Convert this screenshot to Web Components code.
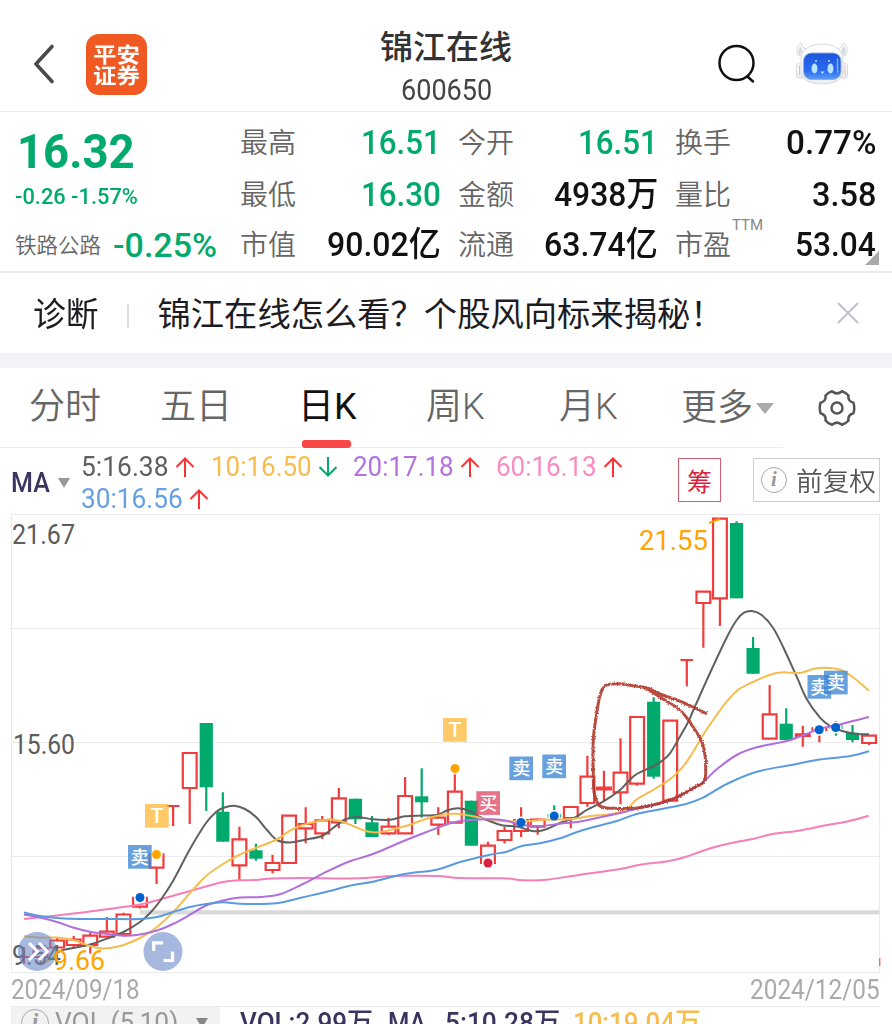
<!DOCTYPE html>
<html lang="zh-CN">
<head>
<meta charset="utf-8">
<title>锦江在线 600650</title>
<style>
  html, body { margin: 0; padding: 0; }
  body {
    width: 892px;
    height: 1024px;
    overflow: hidden;
    background: #fff;
    font-family: Roboto, "Noto Sans CJK SC", sans-serif;
    --up: #f23c3c;
    --down: #00aa6c;
    --ink: #111;
    --gray: #666;
  }
</style>
</head>
<body>
<stock-page></stock-page>

<script>
// text squeezed or stretched to a fixed width
class FitText extends HTMLElement {
  constructor() {
    super();
    this.attachShadow({ mode: "open" });
    this.shadowRoot.innerHTML = `
      <style>
      :host { display: inline-block; white-space: nowrap; line-height: 1.2; }
      span { display: inline-block; transform-origin: 0 50%; }
      </style>
      <span><slot></slot></span>
    `;
  }

  connectedCallback() {
    const width = Number(this.getAttribute("width"));
    const span = this.shadowRoot.querySelector("span");
    const natural = span.offsetWidth;
    this.style.width = `${width}px`;
    if (natural) {
      span.style.transform = `scaleX(${width / natural})`;
    }
  }
}

class StockHeader extends HTMLElement {
  constructor() {
    super();
    this.attachShadow({ mode: "open" });
    this.shadowRoot.innerHTML = `
      <style>
      :host {
        display: grid;
        grid-template-columns: 52px 61px 1fr 79px 52px;
        align-items: center;
        height: 112px;
        box-sizing: border-box;
        padding: 17px 44px 0 34px;
        border-bottom: 1px solid #ececee;
      }
      .logo {
        display: grid;
        place-content: center;
        box-sizing: border-box;
        width: 61px;
        height: 61px;
        border-radius: 13px;
        background: #f05a22;
        color: #fff;
        font: 700 21px/21px "Noto Sans CJK SC", sans-serif;
      }
      .logo fit-text { line-height: 21px; }
      .name { display: flex; flex-direction: column; align-items: center; width: 140px; margin: 3px 0 0 229px; color: #333; }
      .name b { font: 500 33px/44px "Noto Sans CJK SC", sans-serif; }
      .name fit-text { font-size: 30px; margin-top: 5px; line-height: 36px; color: #444; }
      svg { display: block; }
      </style>
      <svg width="22" height="42" viewBox="0 0 22 42" fill="none" stroke="#4a4a4a" stroke-width="3.600" stroke-linecap="round" stroke-linejoin="round"><path d="M18 3.500L2 21l16 17.500"/></svg>
      <div class="logo"><fit-text width="47">平安</fit-text><fit-text width="47">证券</fit-text></div>
      <div class="name"><b><slot name="name"></slot></b><fit-text width="91"><slot name="code"></slot></fit-text></div>
      <svg width="40" height="42" viewBox="0 0 40 42" fill="none" stroke="#111" stroke-width="2.500" stroke-linecap="round"><circle cx="19.500" cy="20" r="17"/><path d="M31 34l5 4.500"/></svg>
      <svg width="52" height="44" viewBox="0 0 52 44">
        <defs>
          <linearGradient id="face" x1="0" y1="0" x2="0" y2="1"><stop offset="0" stop-color="#1c55dc"/><stop offset=".65" stop-color="#2a69ee"/><stop offset="1" stop-color="#5d9bf8"/></linearGradient>
          <linearGradient id="shell" x1="0" y1="0" x2="0" y2="1"><stop offset="0" stop-color="#fff"/><stop offset="1" stop-color="#eceef2"/></linearGradient>
        </defs>
        <g fill="url(#shell)" stroke="#cfd2d8" stroke-width=".8">
          <path d="M2 13C0 8 1 3 5 1c1 3 2 5 5 6l-3 8zM50 13c2-5 1-10-3-12-1 3-2 5-5 6l3 8z"/>
          <rect x=".5" y="21" width="8" height="15" rx="3"/>
          <rect x="43.500" y="21" width="8" height="15" rx="3"/>
          <path d="M26 2c11 0 20 5 21 14v15c-1 7-9 11-21 11S6 38 5 31V16C6 7 15 2 26 2z"/>
        </g>
        <path d="M3 13c-1-3 0-7 1.500-9l2 6zM49 13c1-3 0-7-1.500-9l-2 6z" fill="#d3d9e3"/>
        <path d="M3.500 23v10M49 23v10" stroke="#e6b8b0"/>
        <rect x="7.500" y="11" width="37.500" height="26.500" rx="8" fill="url(#face)" stroke="#97aee0" stroke-width="1"/>
        <g fill="#b9e3ff"><ellipse cx="18.500" cy="26.500" rx="3" ry="5"/><ellipse cx="34.500" cy="26.500" rx="3" ry="5"/><path d="M24.500 29.500h4l-2 2.500z"/><circle cx="20" cy="19" r="1"/><circle cx="33" cy="19" r="1"/></g>
        <path d="M41.500 17v13" stroke="#7db1ff" stroke-width="1.500" stroke-linecap="round"/>
      </svg>
    `;
  }
}

class QuoteCell extends HTMLElement {
  constructor() {
    super();
    this.attachShadow({ mode: "open" });
    const label = this.getAttribute("label");
    const note = this.getAttribute("note");
    this.shadowRoot.innerHTML = `
      <style>
      :host { display: flex; align-items: center; color: var(--ink); }
      :host([down]) { color: var(--down); }
      .label { position: relative; margin-top: -2px; font: 350 28px/40px "Noto Sans CJK SC", sans-serif; color: var(--gray); }
      .note { position: absolute; left: 57px; top: -7px; font: 400 15px/18px Roboto, sans-serif; color: #888; }
      fit-text { margin-left: auto; font-size: 34px; font-weight: 500; line-height: 40px; }
      </style>
      <div class="label">${label}${note ? `<span class="note">${note}</span>` : ""}</div>
      <fit-text width="${this.getAttribute("width")}"><slot></slot></fit-text>
    `;
  }
}

class QuotePanel extends HTMLElement {
  constructor() {
    super();
    this.attachShadow({ mode: "open" });
    this.shadowRoot.innerHTML = `
      <style>
      :host {
        display: flex;
        position: relative;
        box-sizing: border-box;
        height: 161px;
        padding: 4px 16px 0 15px;
        border-bottom: 2px solid #e9e9f1;
      }
      .left { width: 225px; display: flex; flex-direction: column; color: var(--down); }
      .price { font-size: 49px; font-weight: 700; line-height: 60px; margin: 6px 0 0 2px; }
      .change { font-size: 22px; font-weight: 500; line-height: 26px; margin-top: 2px; }
      .sector { display: flex; align-items: center; margin-top: 15px; height: 40px; }
      .sector i { font: 350 21.500px/30px "Noto Sans CJK SC", sans-serif; color: var(--gray); width: 98px; margin-top: -2px; }
      .sector fit-text { font-size: 34px; font-weight: 500; }
      .cells { display: grid; grid-template: 52px 51px 50px / 201px 200px 201px; column-gap: 17px; }
      .fold { position: absolute; right: 13px; bottom: 6px; border: 7.500px solid transparent; border-right-color: #aaa; border-bottom-color: #aaa; }
      </style>
      <div class="left">
        <fit-text class="price" width="118">16.32</fit-text>
        <fit-text class="change" width="123">-0.26 -1.57%</fit-text>
        <div class="sector"><i>铁路公路</i><fit-text width="104">-0.25%</fit-text></div>
      </div>
      <div class="cells">
        <quote-cell label="最高" width="80" down>16.51</quote-cell>
        <quote-cell label="今开" width="80" down>16.51</quote-cell>
        <quote-cell label="换手" width="90">0.77%</quote-cell>
        <quote-cell label="最低" width="80" down>16.30</quote-cell>
        <quote-cell label="金额" width="104">4938万</quote-cell>
        <quote-cell label="量比" width="64">3.58</quote-cell>
        <quote-cell label="市值" width="114">90.02亿</quote-cell>
        <quote-cell label="流通" width="114">63.74亿</quote-cell>
        <quote-cell label="市盈" width="81" note="TTM">53.04</quote-cell>
      </div>
      <div class="fold"></div>
    `;
  }
}

class TipBar extends HTMLElement {
  constructor() {
    super();
    this.attachShadow({ mode: "open" });
    this.shadowRoot.innerHTML = `
      <style>
      :host {
        display: flex;
        align-items: center;
        box-sizing: border-box;
        height: 95px;
        padding: 0 32px 0 33px;
        border-bottom: 15px solid #f2f3f8;
        font: 400 33.300px/48px "Noto Sans CJK SC", sans-serif;
        color: #1c1c22;
      }
      fit-text { margin-top: -3px; }
      .bar { width: 1.500px; height: 24px; margin: 5px 29px 0 28px; background: #dcdce0; }
      svg { margin-left: auto; }
      </style>
      <fit-text width="66">诊断</fit-text><div class="bar"></div><fit-text width="566"><slot></slot></fit-text>
      <svg width="24" height="24" viewBox="0 0 24 24" stroke="#c0c0ce" stroke-width="2"><path d="M2 2l20 20M22 2L2 22"/></svg>
    `;
  }
}

class PeriodTabs extends HTMLElement {
  constructor() {
    super();
    this.attachShadow({ mode: "open" });
    this.shadowRoot.innerHTML = `
      <style>
      :host {
        display: flex;
        align-items: center;
        height: 80px;
        padding-left: 29px;
        font: 350 36px/54px Roboto, "Noto Sans CJK SC", sans-serif;
        color: var(--gray);
        background: linear-gradient(#ececee, #ececee) 0 79px / 783px 1px no-repeat;
      }
      .tab { height: 80px; line-height: 78px; white-space: nowrap; }
      .on { position: relative; color: #111; font-weight: 400; }
      .on::after { content: ""; position: absolute; left: 4px; bottom: 0; width: 49px; height: 8px; border-radius: 3px; background: #f94646; }
      .more { display: flex; align-items: center; }
      .more::after { content: ""; margin-left: 3px; border: 9px solid transparent; border-top: 11px solid #aaa; border-bottom: 0; }
      </style>
      <div class="tab" style="width:131px">分时</div>
      <div class="tab" style="width:138px">五日</div>
      <div class="tab on" style="width:128px"><fit-text width="59" style="line-height:78px">日K</fit-text></div>
      <div class="tab" style="width:133px">周K</div>
      <div class="tab" style="width:122px">月K</div>
      <div class="tab more" style="width:137px">更多</div>
      <svg width="38" height="38" viewBox="-19 -19 38 38" fill="none" stroke="#555" stroke-width="2.500" stroke-linejoin="round">
        <path d="M-5-16.800Q0-12.500 5-16.800Q9-15.500 11.500-12.500Q10.500-7 16.500-5.200Q18 0 16.500 5.200Q10.500 7 11.500 12.500Q9 15.500 5 16.800Q0 12.500-5 16.800Q-9 15.500-11.500 12.500Q-10.500 7-16.500 5.200Q-18 0-16.500-5.200Q-10.500-7-11.500-12.500Q-9-15.500-5-16.800Z"/>
        <circle r="5.500"/>
      </svg>
    `;
  }
}

class MaValue extends HTMLElement {
  constructor() {
    super();
    this.attachShadow({ mode: "open" });
    const down = this.hasAttribute("down");
    this.shadowRoot.innerHTML = `
      <style>
      :host { display: inline-flex; align-items: center; height: 32px; font-size: 27px; font-weight: 450; }
      svg { margin-left: 6px; }
      </style>
      <fit-text width="${this.getAttribute("width")}"><slot></slot></fit-text>
      <svg width="20" height="22" viewBox="0 0 20 22" fill="none" stroke="${down ? "#00aa6c" : "#fa3232"}" stroke-width="2"><path d="${
        down ? "M10 1v18.500M1.500 11l8.500 8.500 8.500-8.500" : "M10 21V2.500M1.500 11L10 2.500l8.500 8.500"
      }"/></svg>
    `;
  }
}

class MaBar extends HTMLElement {
  constructor() {
    super();
    this.attachShadow({ mode: "open" });
    this.shadowRoot.innerHTML = `
      <style>
      :host { display: flex; height: 66px; padding-left: 11px; }
      .ma { display: flex; align-items: center; width: 70px; padding-top: 4px; font-size: 27px; font-weight: 500; color: #3b3461; }
      .ma::after { content: ""; margin-left: 8px; border: 6.500px solid transparent; border-top: 10px solid #999; border-bottom: 0; }
      .values { width: 597px; padding-top: 3px; }
      .row { display: flex; gap: 15.500px; height: 32px; }
      .box { display: flex; align-items: center; box-sizing: border-box; height: 44px; margin-top: 10px; font: 400 25px/40px "Noto Sans CJK SC", sans-serif; }
      .chip { width: 43px; justify-content: center; border: 1px solid #d06070; color: #d8203f; }
      .adjust { width: 127px; margin-left: 32px; padding-left: 7px; border: 1px solid #ccc; color: #555; }
      .adjust fit-text { margin-left: 9px; font-weight: 350; font-size: 26px; }
      </style>
      <div class="ma"><fit-text width="39">MA</fit-text></div>
      <div class="values">
        <div class="row">
          <ma-value width="88" style="color:#606060">5:16.38</ma-value>
          <ma-value width="101" style="color:#f6bd4e" down>10:16.50</ma-value>
          <ma-value width="101" style="color:#b472df">20:17.18</ma-value>
          <ma-value width="101" style="color:#f98cc0">60:16.13</ma-value>
        </div>
        <div class="row"><ma-value width="102" style="color:#66a0e2">30:16.56</ma-value></div>
      </div>
      <div class="box chip">筹</div>
      <div class="box adjust">
        <info-mark size="26"></info-mark><fit-text width="80">前复权</fit-text>
      </div>
    `;
  }
}

class InfoMark extends HTMLElement {
  constructor() {
    super();
    this.attachShadow({ mode: "open" });
    const size = this.getAttribute("size");
    this.shadowRoot.innerHTML = `
      <style>
      :host {
        display: inline-block;
        flex: none;
        box-sizing: border-box;
        width: ${size}px;
        height: ${size}px;
        border: 1.500px solid #aaa;
        border-radius: 50%;
        font: italic 700 ${size * 0.8}px/${size - 4}px "Liberation Serif", serif;
        color: #999;
        text-align: center;
      }
      </style>i`;
  }
}

// kind, high, top, bottom, low (ot / ob: body open at the top / bottom)
const CANDLES = [
  ["r", 947, 957, 957, 964], ["r", 945, 948, 957, 965], ["r", 938, 940.5, 947.5, 948.5],
  ["r", 936, 939.5, 945, 948.5], ["r", 932.7, 935.7, 945, 953.5], ["r", 917, 931.7, 936.7, 937],
  ["r", 912.7, 914.5, 934, 934], ["ot", 896.7, 896.7, 906.7, 908.5], ["ot", 853.3, 853.3, 867.7, 884],
  ["r", 806, 806, 806, 826], ["r", 753, 753, 788, 824], ["g", 723, 723, 787.3, 811],
  ["g", 792.3, 811.7, 841.7, 841.7], ["r", 826.7, 839.3, 865.3, 880], ["g", 843.7, 850.3, 858.7, 860.7],
  ["r", 854.7, 863, 870, 873.3], ["r", 815.7, 815.7, 863, 863], ["r", 807.3, 824, 828.3, 843.3],
  ["r", 816, 820.3, 833.3, 839], ["r", 788, 798.3, 822.3, 828.3], ["g", 798.7, 798.7, 819.3, 824],
  ["g", 816, 822.3, 837, 837], ["r", 817.7, 826.7, 833.3, 835], ["r", 777, 796, 833.3, 833.3],
  ["g", 768.3, 796.3, 802.3, 817.7], ["r", 807.3, 817.7, 824.7, 835], ["r", 774, 791.7, 822.7, 822.7],
  ["g", 800.7, 800.7, 845.7, 845.7], ["ob", 841.7, 845.7, 864, 864], ["r", 827, 831, 840, 843.3],
  ["r", 807.3, 820, 831, 837], ["r", 818.3, 819.5, 826.7, 834.7], ["g", 805.3, 814, 817.7, 820],
  ["r", 807, 807, 818, 828.3], ["r", 755.7, 776.7, 803, 806.7], ["r", 770.7, 787.5, 789.5, 801.7],
  ["r", 738.3, 772.7, 792.3, 804.3], ["r", 717, 717, 783.7, 785.7], ["g", 697.3, 701.7, 776.7, 778.7],
  ["r", 720.7, 720.7, 800.7, 800.7], ["r", 660, 660, 660, 686.3], ["r", 591.7, 591.7, 603, 647.7],
  ["r", 518.7, 518.7, 598.3, 626], ["g", 521.3, 523, 598.3, 598.3], ["g", 637, 648, 673.7, 673.7],
  ["r", 685, 714.3, 738.7, 738.7], ["g", 708.3, 723.7, 740, 740], ["r", 725.7, 734.3, 736, 746.7],
  ["ot", 727.3, 727.3, 730, 742.3], ["g", 721, 725, 729, 735.7], ["g", 725, 732.7, 740, 742.3],
  ["r", 735.7, 735.7, 743, 745],
];

const LINES = [
  ["#f77fb8", [24,919,57,915.5,90,911.5,140,904.5,165,898,190,891,223,882,240,880.3,256,880,272,878.5,300,878,360,878.3,393,876,436.7,876,460,878,503,878.3,523,880.3,546.7,879.7,580,874.7,619,869.3,639,865,669,861,686,856.7,709,848.7,732.7,842.7,752.7,839,772.7,834,799,830.7,826,825.3,846,821.7,868.7,815.7]],
  ["#5f6060", [57,953,63,950,78,947,90,944.5,107,938.5,123.5,932,140,922,150,913,160,901,173,881,190,849,206,823,216,812,223,808,234,805.7,245,809,256,817,267,830,277,840,290,842.5,305,839.7,322,836,333,828,345,819.5,357,817,373,819.3,390,819.7,405,816.3,422,815.5,437,815,447,810.5,458,808.3,470,811,480,817,492,822,503,825.5,517,826.5,530,830.5,538,831.3,547,829,560,823,575,817.5,586.7,810,603,801.7,620,790,628,781.7,636.7,774,653.7,766,663,760,670,753.3,678,740,688.3,721.7,693,711,710,673,727,637,736.7,620,744,612.7,752,611,761.7,615,773,627.7,783,646.7,796.7,676.7,806.7,699,820,717.7,830,726,843,731.3,856.7,734,869,734.3]],
  ["#f5bd4f", [24,936.3,40,937.7,57,937.5,73,940,90,946,100,948.3,110,948,123.5,945,140,938,153,930,165,920,177,908,190,893,206,876,223,864,240,854.5,260,846.3,276.7,839.5,293,829,310,823,326.7,819.7,340,821,353,826,366.7,831.3,378,832.3,393,829.3,410,824.7,426.7,818.7,443,814.7,456.7,813.7,473,816.3,493,820,520,821.7,546,819.7,569,819.3,589,816.3,613,813.7,626.7,809.3,636.7,799.3,653,790,670,779.3,683,766.7,693,752,703,735,716.7,715,726.7,701.7,738,690,753,682,770,674.7,783,672.3,800,673,813,669,825,667.7,840,669.7,853,677.3,869,690.7]],
  ["#b06fdb", [24,914.5,40,917.5,57,922,73,927.5,90,931.7,107,934,123.5,935.7,140,934.5,157,930.5,173,924,190,914.7,206,905.5,223,900.5,240,897.5,260,897,280,894.3,303,884,326.7,871.7,350,861.3,373,854,403,841.3,426.7,832,450,823.3,466.7,820.3,493,819.3,506.7,820.7,520,824.7,540,826,560,823.7,580,821.5,603,816.7,623,812.3,643,807,663,802.7,683,794,701.7,783.3,716.7,769.3,736.7,755,756.7,747.3,786.7,741,806.7,734,819,728.7,835.7,725.3,869,717]],
  ["#5a9be0", [24,912.5,40,916,60,918.3,80,919,107,919,140,919,157,917,173,912,190,907,206,904,223,902.3,240,903.7,262,904,280,902.7,303,897.3,326.7,891.7,353,885,373,881.7,403,874.3,436.7,869.7,460,862,490,854.7,506.7,851.7,521.7,846,540,843.3,560,838.3,583,830,616.7,821,636.7,814,663,808.7,686.7,803.7,703,797.7,726.7,784,756.7,771.7,790,765.3,816.7,760,850,756,869,751.3]],
];

const SKETCH = [706.7,714,693,707,676.7,700,660,694,648,688.3,633,685.7,620,683.7,606.7,685,600.7,693.3,596.7,713,593.3,740,593.3,776.7,594.3,793.3,600,806,613.3,808.3,636.7,808,656.7,804,676.7,797.3,693,788,704,781.7,705.7,766.7,703,745,693,726.7,680,710,663,699,646,688];

const TAGS = [
  [145, 804, "T", "#ffba3f"], [443, 718, "T", "#ffba3f"], [128, 845, "卖", "#3d87d5"],
  [509.3, 756.5, "卖", "#3d87d5"], [542.3, 754.5, "卖", "#3d87d5"], [476.3, 791.2, "买", "#e24c68"],
  [807.5, 675, "卖", "#3d87d5"], [824, 670.7, "卖", "#3d87d5"],
];

const DOTS = [
  [156.5, 854.5, "#ffa500"], [455, 768.5, "#ffa500"], [140, 897.5, "#0062cc"], [521, 822.5, "#0062cc"],
  [554.2, 816, "#0062cc"], [819.2, 729.7, "#0062cc"], [835.7, 727.5, "#0062cc"], [488, 863, "#dc1f3c"],
];

class KlineChart extends HTMLElement {
  constructor() {
    super();
    this.attachShadow({ mode: "open" });
    this.shadowRoot.innerHTML = `
      <style>
      :host { display: block; height: 459px; }
      svg { display: block; }
      text { font-family: Roboto, "Noto Sans CJK SC", sans-serif; font-weight: 450; }
      </style>
      <svg width="892" height="459" viewBox="0 514 892 459">
        <defs>
          <filter id="rough" x="-5%" y="-5%" width="110%" height="110%">
            <feTurbulence type="fractalNoise" baseFrequency=".7" numOctaves="2" seed="4"/>
            <feDisplacementMap in="SourceGraphic" scale="3" xChannelSelector="R" yChannelSelector="G"/>
          </filter>
        </defs>
        <path d="M11.500 514.500H879.500V972.500H11.500ZM11.500 628.500H879.500M11.500 742.500H879.500M11.500 856.500H879.500" fill="none" stroke="#ebebeb"/>
        <path d="M140 912.300H879.500" stroke="#d9d9d9" stroke-width="4.200"/>
        <path d="M879.700 958v8" stroke="#dd7a7a" stroke-width="1.500"/>
        ${CANDLES.map((c, i) => this.candle(c, 24 + 16.57 * i)).join("")}
        ${DOTS.map(([x, y]) => `<circle cx="${x}" cy="${y}" r="6" fill="#fff"/>`).join("")}
        ${LINES.map(([color, p]) => `<path d="${this.curve(p)}" fill="none" stroke="${color}" stroke-width="2"/>`).join("")}
        <path d="M709 523l11-4M40 965l14-8" stroke="#ffa500" stroke-width="2"/>
        ${this.label("21.67", 12, 543.6, 63, "#5c5c5c")}
        ${this.label("15.60", 13, 753.6, 62, "#5c5c5c")}
        ${this.label("9.54", 12, 965, 49, "#5c5c5c")}
        <g fill="#6d88c8" fill-opacity=".6"><circle cx="37.300" cy="951.500" r="19.500"/><circle cx="163" cy="951.500" r="19.500"/></g>
        <path d="M29 943l8.500 8.500-8.500 8.500M39 943l8.500 8.500-8.500 8.500" fill="none" stroke="#fff" stroke-width="3"/>
        <path d="M153.700 951v-8.200H163M163.500 960.500h9v-9" fill="none" stroke="#fff" stroke-width="3.200"/>
        ${this.label("9.66", 53, 969.6, 52, "#ffa500", 28.5)}
        ${this.label("21.55", 639, 550, 69, "#ffa500", 28.5)}
        ${TAGS.map(([x, y, t, color]) => `
          <rect x="${x}" y="${y}" width="23.700" height="23.700" fill="${color}" fill-opacity=".78"/>
          <text x="${x + 11.85}" y="${y + (t === "T" ? 19.2 : 18.6)}" text-anchor="middle" fill="#fff" style="font-size:${t === "T" ? 21 : 18}px;font-weight:500">${t}</text>`).join("")}
        ${DOTS.map(([x, y, color]) => `<circle cx="${x}" cy="${y}" r="4.500" fill="${color}"/>`).join("")}
        <path d="${this.curve(SKETCH)}" fill="none" stroke="#b3392c" stroke-opacity=".9" stroke-width="3" filter="url(#rough)"/>
      </svg>
    `;
  }

  label(text, x, y, width, color, size = 27) {
    return `<text x="${x}" y="${y}" fill="${color}" style="font-size:${size}px" textLength="${width}" lengthAdjust="spacingAndGlyphs">${text}</text>`;
  }

  candle([kind, high, top, bottom, low], x) {
    if (kind === "g") {
      return `<path d="M${x} ${high}V${low}" stroke="#00aa6c" stroke-width="2.200"/>
        <rect x="${x - 6.6}" y="${top}" width="13.200" height="${bottom - top}" fill="#00aa6c"/>`;
    }
    // a body without height is a plain bar, as wide as the green ones
    const half = top === bottom ? 6.3 : 6.9;
    const l = x - half;
    const r = x + half;
    let body = `M${l} ${top}H${r}V${bottom}H${l}Z`;
    if (kind === "ot") body = `M${l} ${top}V${bottom}H${r}V${top}`;
    if (kind === "ob") body = `M${l} ${bottom}V${top}H${r}V${bottom}`;
    return `<path d="M${x} ${high}V${top}M${x} ${bottom}V${low}${body}" fill="none" stroke="#f23c3c" stroke-width="2.200"/>`;
  }

  // Catmull-Rom through flat x,y pairs
  curve(p) {
    const n = p.length / 2;
    const at = (i) => {
      const k = Math.max(0, Math.min(n - 1, i));
      return [p[k * 2], p[k * 2 + 1]];
    };
    let d = `M${at(0)}`;
    for (let i = 0; i < n - 1; i++) {
      const [a, b, c, e] = [at(i - 1), at(i), at(i + 1), at(i + 2)];
      d += `C${b[0] + (c[0] - a[0]) / 6},${b[1] + (c[1] - a[1]) / 6} ${c[0] - (e[0] - b[0]) / 6},${c[1] - (e[1] - b[1]) / 6} ${c}`;
    }
    return d;
  }
}

class ChartFooter extends HTMLElement {
  constructor() {
    super();
    this.attachShadow({ mode: "open" });
    this.shadowRoot.innerHTML = `
      <style>
      :host { display: block; padding: 0 12px 0 11px; font-size: 27px; }
      .dates { display: flex; justify-content: space-between; height: 33px; align-items: center; padding-top: 1px; box-sizing: border-box; color: #aaa; }
      .vol { display: flex; align-items: center; height: 32px; border-top: 1px solid #ebebeb; color: #3b3461; font-weight: 500; line-height: 32px; }
      .pick { display: flex; align-items: center; box-sizing: border-box; width: 209px; height: 32px; padding-left: 10px; background: #f2f2f2; color: #999; font-weight: 400; }
      .pick fit-text { margin-left: 6px; }
      .pick::after { content: ""; margin-left: 18px; border: 6.500px solid transparent; border-top: 10px solid #888; border-bottom: 0; }
      </style>
      <div class="dates"><fit-text width="129">2024/09/18</fit-text><fit-text width="130">2024/12/05</fit-text></div>
      <div class="vol">
        <div class="pick"><info-mark size="28"></info-mark><fit-text width="123">VOL (5,10)</fit-text></div>
        <fit-text width="133" style="margin-left:20px">VOL:2.99万</fit-text>
        <fit-text width="38" style="margin-left:15px">MA</fit-text>
        <fit-text width="115" style="margin-left:19px">5:10.28万</fit-text>
        <fit-text width="128" style="margin-left:13px;color:#f6bd4e">10:19.04万</fit-text>
      </div>
    `;
  }
}

class StockPage extends HTMLElement {
  constructor() {
    super();
    this.attachShadow({ mode: "open" });
    this.shadowRoot.innerHTML = `
      <style>
      :host { display: flex; flex-direction: column; width: 892px; height: 1024px; overflow: hidden; }
      :host > *, stock-header, quote-panel, tip-bar, period-tabs, ma-bar, kline-chart, chart-footer { flex: none; }
      </style>
      <stock-header><span slot="name">锦江在线</span><span slot="code">600650</span></stock-header>
      <quote-panel></quote-panel>
      <tip-bar>锦江在线怎么看？个股风向标来揭秘！</tip-bar>
      <period-tabs></period-tabs>
      <ma-bar></ma-bar>
      <kline-chart></kline-chart>
      <chart-footer></chart-footer>
    `;
  }
}

customElements.define("info-mark", InfoMark);
customElements.define("stock-header", StockHeader);
customElements.define("quote-cell", QuoteCell);
customElements.define("quote-panel", QuotePanel);
customElements.define("tip-bar", TipBar);
customElements.define("period-tabs", PeriodTabs);
customElements.define("ma-value", MaValue);
customElements.define("ma-bar", MaBar);
customElements.define("kline-chart", KlineChart);
customElements.define("chart-footer", ChartFooter);
customElements.define("stock-page", StockPage);
// last, so that the slotted text is laid out when it is measured
customElements.define("fit-text", FitText);
</script>
</body>
</html>
